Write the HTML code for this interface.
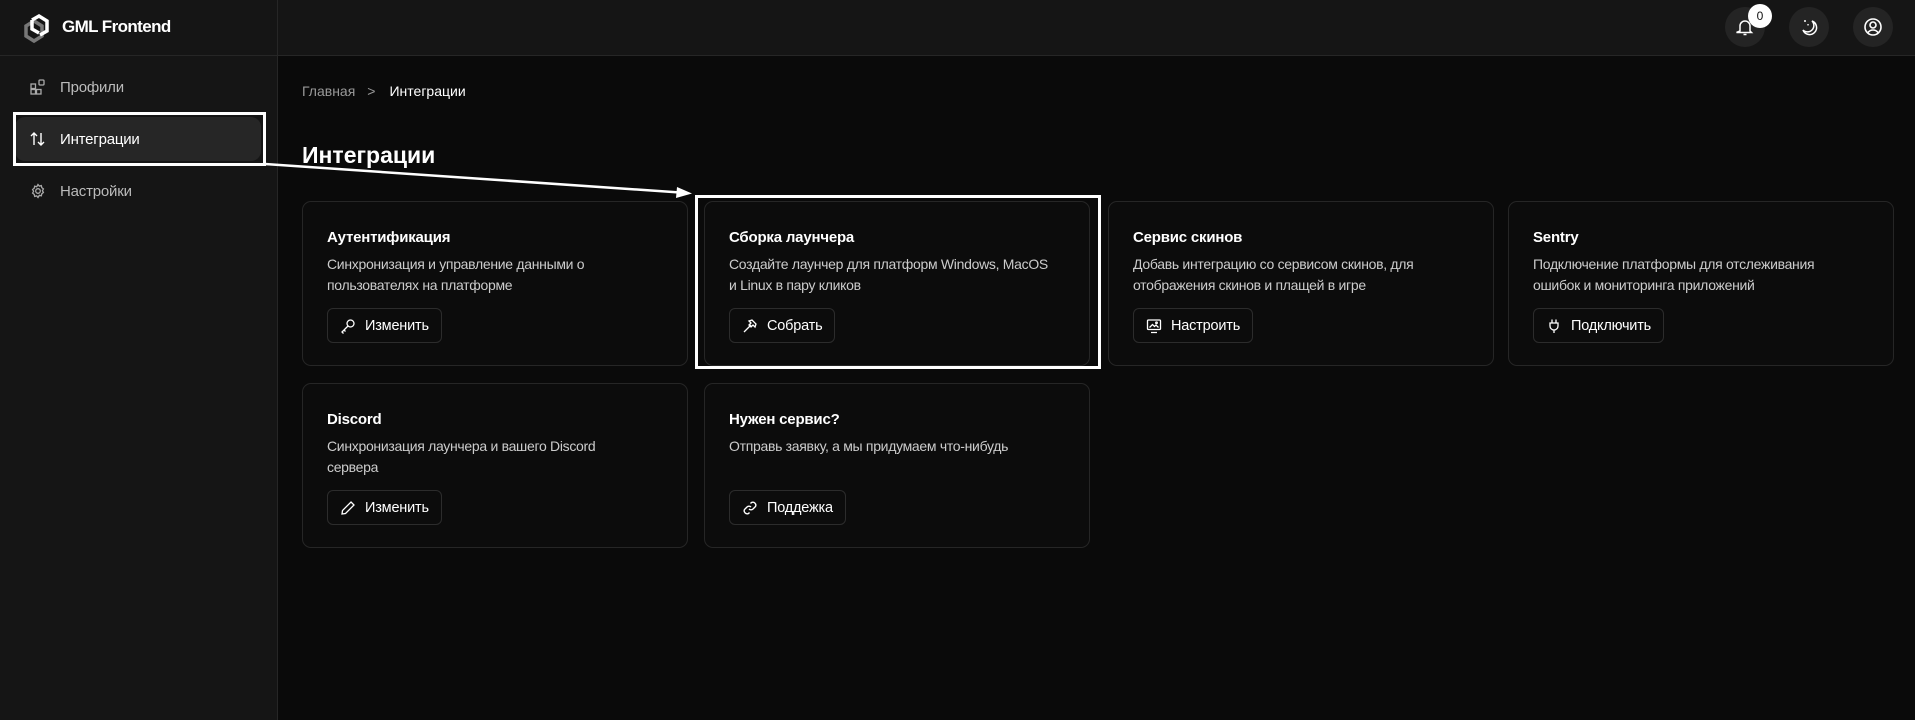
<!DOCTYPE html>
<html><head><meta charset="utf-8"><style>
*{box-sizing:border-box;margin:0;padding:0}
body{width:1915px;height:720px;background:#0a0a0a;font-family:"Liberation Sans",sans-serif;color:#fff;position:relative;overflow:hidden}
.side{position:absolute;left:0;top:0;width:278px;height:720px;background:#151515;border-right:1px solid #262626}
.top{position:absolute;left:278px;top:0;right:0;height:56px;background:#151515;border-bottom:1px solid #262626}
.sidetop{position:absolute;left:0;top:0;width:278px;height:56px;border-bottom:1px solid #262626}
.logo{position:absolute;left:22px;top:12px}
.brand{position:absolute;left:62px;top:17px;font-size:17px;font-weight:bold;letter-spacing:-0.6px}
.nav{position:absolute;left:15px;width:246px;height:44px;border-radius:10px;display:flex;align-items:center;padding-left:15px;font-size:15px;color:#bbb;letter-spacing:-0.2px}
.nav svg{margin-right:14px}
.nav.act{background:#262626;color:#fff}
.hl{position:absolute;border:3px solid #fff}
.bc{position:absolute;left:302px;top:83px;font-size:14px;color:#999}
.bc b{color:#fff;font-weight:normal;margin-left:14px}
.bc span{margin-left:12px}
h1{position:absolute;left:302px;top:142px;font-size:23px;font-weight:bold}
.card{position:absolute;width:386px;height:165px;border:1px solid #262626;border-radius:9px;background:#0c0c0c;padding:24px 24px}
.card h3{font-size:15px;font-weight:bold;margin-top:3px;margin-bottom:8px;letter-spacing:-0.2px}
.card p{font-size:14px;line-height:21px;color:#ccc;height:42px;letter-spacing:-0.3px;white-space:nowrap}
.btn{position:absolute;left:24px;top:106px;height:35px;border:1px solid #2c2c2c;border-radius:6px;display:flex;align-items:center;padding:0 12px;font-size:14.5px;color:#fff;background:#0c0c0c;letter-spacing:-0.2px}
.btn svg{margin-right:9px}
.ic{position:absolute;top:7px;width:40px;height:40px;border-radius:50%;background:#242424;display:flex;align-items:center;justify-content:center}
</style></head><body>
<div class="side">
<div class="sidetop"></div>
<svg class="logo" width="32" height="32" viewBox="0 0 32 32" fill="none" stroke-width="3.5"><path d="M4 14 L12 9 L20 14 V24 L12 29 L4 24Z" stroke="#777"/><path d="M10 8 L17 4 L25 9 V19 L18 23" stroke="#fff"/><path d="M10 8 L10 17 L17 21" stroke="#fff"/></svg>
<div class="brand">GML Frontend</div>
<div class="nav" style="top:65px"><svg width="16" height="16" viewBox="0 0 16 16" fill="none" stroke="#aaa" stroke-width="1.3"><rect x="1" y="5" width="4.5" height="4.5"/><rect x="1" y="10.5" width="4.5" height="4.5"/><rect x="6.5" y="10.5" width="4.5" height="4.5"/><rect x="9" y="1" width="5" height="5" rx="1"/></svg>Профили</div>
<div class="nav act" style="top:117px"><svg width="16" height="16" viewBox="0 0 16 16" fill="none" stroke="#fff" stroke-width="1.4"><path d="M4 14V2M1 5l3-3 3 3M11 2v12M8 11l3 3 3-3"/></svg>Интеграции</div>
<div class="nav" style="top:169px"><svg width="16" height="16" viewBox="0 0 16 16" fill="none" stroke="#aaa" stroke-width="1.3"><circle cx="8" cy="8" r="2.3"/><path d="M8 1.5l1.3 1.6 2-.5.5 2 1.6 1.3-1 1.8 1 1.8-1.6 1.3-.5 2-2-.5L8 14.5l-1.3-1.6-2 .5-.5-2-1.6-1.3 1-1.8-1-1.8 1.6-1.3.5-2 2 .5z"/></svg>Настройки</div>
</div>
<div class="top">
<div class="ic" style="left:1447px"><svg width="18" height="18" viewBox="0 0 18 18" fill="none" stroke="#fff" stroke-width="1.5"><path d="M4 13V8a5 5 0 0110 0v5l1.5 1.5h-15zM7.5 16.5h3"/></svg></div>
<div style="position:absolute;left:1470px;top:4px;width:24px;height:24px;border-radius:50%;background:#fff;color:#111;font-size:12px;display:flex;align-items:center;justify-content:center">0</div>
<div class="ic" style="left:1511px"><svg width="20" height="20" viewBox="0 0 20 20" fill="none" stroke="#fff" stroke-width="1.5"><path d="M13 4a7 7 0 11-9 9 6 6 0 009-9z"/><path d="M6 3v2M5 4h2M9 7v1.5M8.3 7.7h1.5" stroke-width="1"/></svg></div>
<div class="ic" style="left:1575px"><svg width="20" height="20" viewBox="0 0 20 20" fill="none" stroke="#fff" stroke-width="1.6"><circle cx="10" cy="10" r="8"/><circle cx="10" cy="8" r="3"/><path d="M5 15.5c1.5-2 3-2.5 5-2.5s3.5.5 5 2.5"/></svg></div>
</div>
<div class="bc">Главная<span>&gt;</span><b>Интеграции</b></div>
<h1>Интеграции</h1>

<div class="card" style="left:302px;top:201px"><h3>Аутентификация</h3><p>Синхронизация и управление данными о<br>пользователях на платформе</p>
<div class="btn"><svg width="16" height="16" viewBox="0 0 16 16" fill="none" stroke="#fff" stroke-width="1.3"><circle cx="10.5" cy="5.5" r="3.5"/><path d="M8 8l-6 6 1.5 1.5M4 12l1.5 1.5"/></svg>Изменить</div></div>
<div class="card" style="left:704px;top:201px"><h3>Сборка лаунчера</h3><p>Создайте лаунчер для платформ Windows, MacOS<br>и Linux в пару кликов</p>
<div class="btn"><svg width="16" height="16" viewBox="0 0 16 16" fill="none" stroke="#fff" stroke-width="1.3"><path d="M2 14l7-7M7 3l3-1 4 4-1 3-2-2-2 2-2-2 2-2z"/></svg>Собрать</div></div>
<div class="card" style="left:1108px;top:201px"><h3>Сервис скинов</h3><p>Добавь интеграцию со сервисом скинов, для<br>отображения скинов и плащей в игре</p>
<div class="btn"><svg width="16" height="16" viewBox="0 0 16 16" fill="none" stroke="#fff" stroke-width="1.3"><rect x="1.5" y="2" width="13" height="9.5" rx="1"/><path d="M5 14.5h6M3.5 9.5l3-3 2 2 1.5-1.5 2.5 2.5"/><circle cx="10.5" cy="4.8" r=".8"/></svg>Настроить</div></div>
<div class="card" style="left:1508px;top:201px"><h3>Sentry</h3><p>Подключение платформы для отслеживания<br>ошибок и мониторинга приложений</p>
<div class="btn"><svg width="16" height="16" viewBox="0 0 16 16" fill="none" stroke="#fff" stroke-width="1.3"><path d="M6 1.5v3.5M10 1.5v3.5M4 5h8v3a4 4 0 01-8 0zM8 12v3"/></svg>Подключить</div></div>
<div class="card" style="left:302px;top:383px"><h3>Discord</h3><p>Синхронизация лаунчера и вашего Discord<br>сервера</p>
<div class="btn"><svg width="16" height="16" viewBox="0 0 16 16" fill="none" stroke="#fff" stroke-width="1.3"><path d="M11 2l3 3-8.5 8.5L2 14l.5-3.5z"/></svg>Изменить</div></div>
<div class="card" style="left:704px;top:383px"><h3>Нужен сервис?</h3><p>Отправь заявку, а мы придумаем что-нибудь</p>
<div class="btn"><svg width="16" height="16" viewBox="0 0 16 16" fill="none" stroke="#fff" stroke-width="1.4"><path d="M7 9a3 3 0 004 0l2.5-2.5a3 3 0 00-4-4L8.5 3.5M9 7a3 3 0 00-4 0L2.5 9.5a3 3 0 004 4l1-1"/></svg>Поддежка</div></div>

<div class="hl" style="left:13px;top:112px;width:253px;height:54px"></div>
<div class="hl" style="left:695px;top:195px;width:406px;height:174px"></div>
<svg style="position:absolute;left:0;top:0" width="1915" height="720"><line x1="265" y1="164" x2="680" y2="192.5" stroke="#fff" stroke-width="2.5"/><path d="M692 193.5 L677 187 L676 198 Z" fill="#fff"/></svg>
</body></html>
